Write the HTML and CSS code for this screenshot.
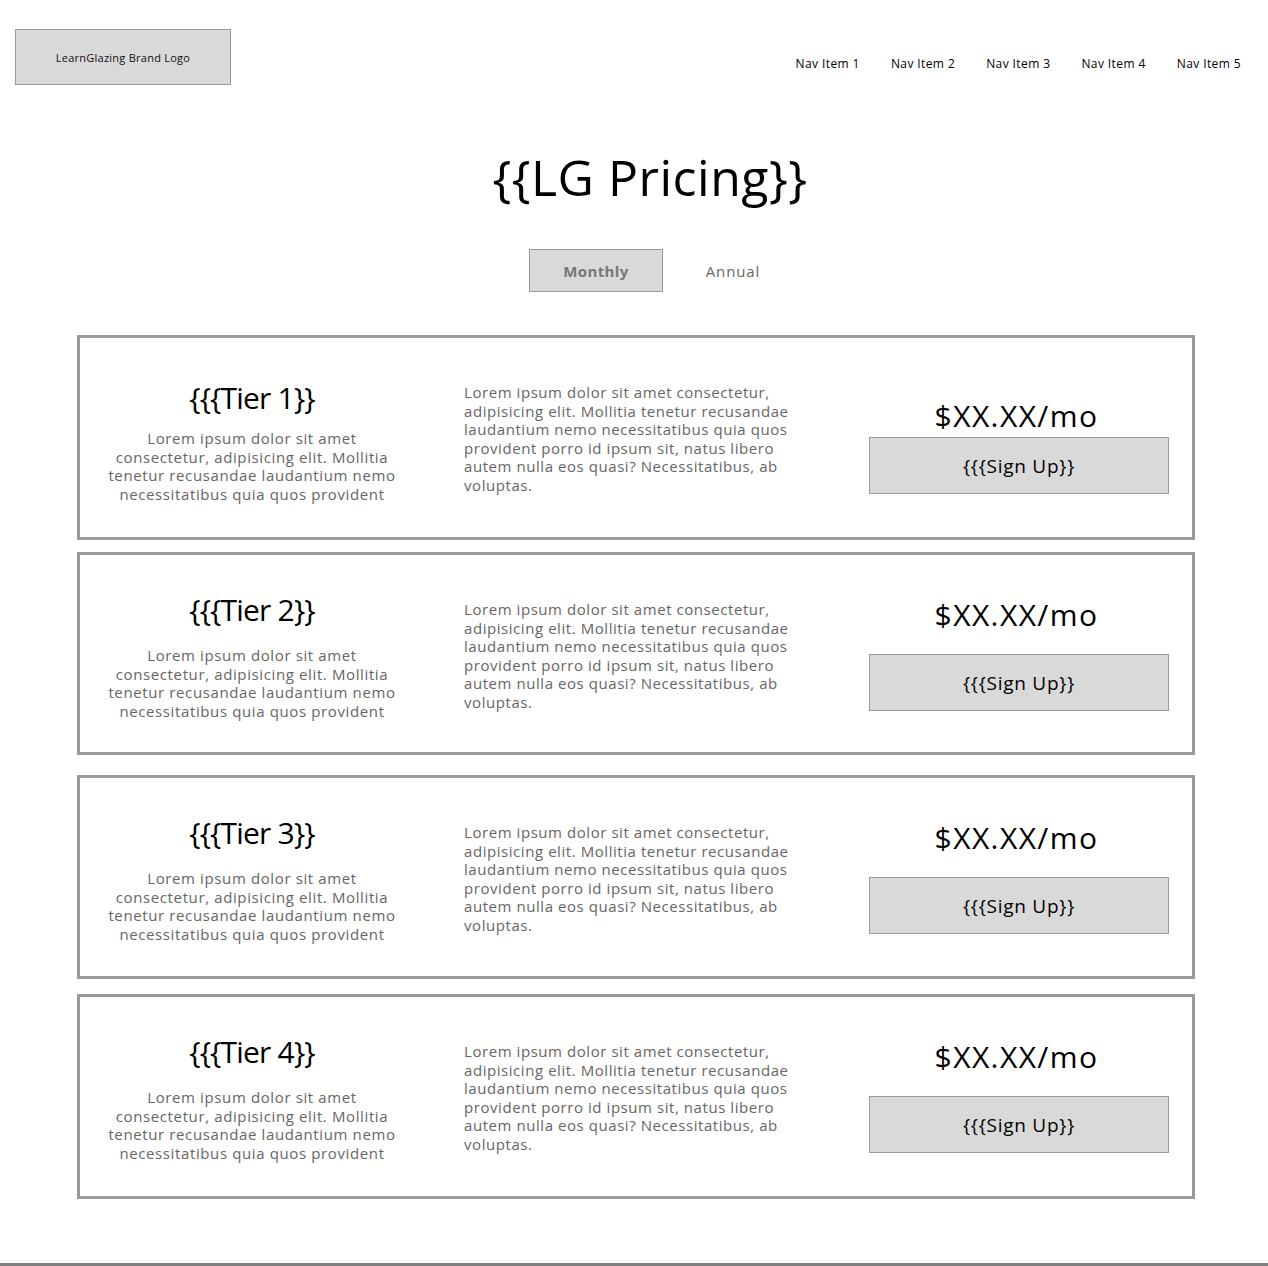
FILE: index.html
```html
<!DOCTYPE html>
<html lang="en">
<head>
<meta charset="utf-8">
<title>LG Pricing</title>
<link rel="stylesheet" href="styles.css">
</head>
<body>
<header class="header">
  <div class="logo">LearnGlazing Brand Logo</div>
  <nav class="nav">
    <a class="nav-item">Nav Item 1</a>
    <a class="nav-item">Nav Item 2</a>
    <a class="nav-item">Nav Item 3</a>
    <a class="nav-item">Nav Item 4</a>
    <a class="nav-item">Nav Item 5</a>
  </nav>
</header>

<h1 class="title">{{LG Pricing}}</h1>

<div class="toggle">
  <button class="toggle-btn toggle-btn--active">Monthly</button>
  <button class="toggle-btn toggle-btn--plain">Annual</button>
</div>

<main class="cards">
  <section class="card card--first">
    <div class="col-tier">
      <h2 class="tier-name">{{{Tier 1}}</h2>
      <p class="tier-desc">Lorem ipsum dolor sit amet<br>consectetur, adipisicing elit. Mollitia<br>tenetur recusandae laudantium nemo<br>necessitatibus quia quos provident</p>
    </div>
    <p class="col-text">Lorem ipsum dolor sit amet consectetur,<br>adipisicing elit. Mollitia tenetur recusandae<br>laudantium nemo necessitatibus quia quos<br>provident porro id ipsum sit, natus libero<br>autem nulla eos quasi? Necessitatibus, ab<br>voluptas.</p>
    <div class="col-price">
      <div class="price">$XX.XX/mo</div>
      <button class="signup">{{{Sign Up}}</button>
    </div>
  </section>

  <section class="card card--second">
    <div class="col-tier">
      <h2 class="tier-name">{{{Tier 2}}</h2>
      <p class="tier-desc">Lorem ipsum dolor sit amet<br>consectetur, adipisicing elit. Mollitia<br>tenetur recusandae laudantium nemo<br>necessitatibus quia quos provident</p>
    </div>
    <p class="col-text">Lorem ipsum dolor sit amet consectetur,<br>adipisicing elit. Mollitia tenetur recusandae<br>laudantium nemo necessitatibus quia quos<br>provident porro id ipsum sit, natus libero<br>autem nulla eos quasi? Necessitatibus, ab<br>voluptas.</p>
    <div class="col-price">
      <div class="price">$XX.XX/mo</div>
      <button class="signup">{{{Sign Up}}</button>
    </div>
  </section>

  <section class="card card--third">
    <div class="col-tier">
      <h2 class="tier-name">{{{Tier 3}}</h2>
      <p class="tier-desc">Lorem ipsum dolor sit amet<br>consectetur, adipisicing elit. Mollitia<br>tenetur recusandae laudantium nemo<br>necessitatibus quia quos provident</p>
    </div>
    <p class="col-text">Lorem ipsum dolor sit amet consectetur,<br>adipisicing elit. Mollitia tenetur recusandae<br>laudantium nemo necessitatibus quia quos<br>provident porro id ipsum sit, natus libero<br>autem nulla eos quasi? Necessitatibus, ab<br>voluptas.</p>
    <div class="col-price">
      <div class="price">$XX.XX/mo</div>
      <button class="signup">{{{Sign Up}}</button>
    </div>
  </section>

  <section class="card card--fourth">
    <div class="col-tier">
      <h2 class="tier-name">{{{Tier 4}}</h2>
      <p class="tier-desc">Lorem ipsum dolor sit amet<br>consectetur, adipisicing elit. Mollitia<br>tenetur recusandae laudantium nemo<br>necessitatibus quia quos provident</p>
    </div>
    <p class="col-text">Lorem ipsum dolor sit amet consectetur,<br>adipisicing elit. Mollitia tenetur recusandae<br>laudantium nemo necessitatibus quia quos<br>provident porro id ipsum sit, natus libero<br>autem nulla eos quasi? Necessitatibus, ab<br>voluptas.</p>
    <div class="col-price">
      <div class="price">$XX.XX/mo</div>
      <button class="signup">{{{Sign Up}}</button>
    </div>
  </section>
</main>

<footer class="footer"></footer>
</body>
</html>
```

FILE: styles.css
```css
* { box-sizing: border-box; }

html, body {
  margin: 0;
  padding: 0;
  background: #ffffff;
}

body {
  font-family: "Open Sans", "Noto Sans", "Liberation Sans", sans-serif;
  color: #000;
  overflow: hidden;
}

.header {
  display: flex;
  justify-content: space-between;
  align-items: flex-start;
  padding: 29px 27px 0 15px;
  height: 85px;
}

.logo {
  width: 216px;
  height: 56px;
  background: #d9d9d9;
  border: 1px solid #9a9a9a;
  display: flex;
  align-items: center;
  justify-content: center;
  font-size: 11px;
  letter-spacing: 0.25px;
  color: #111;
}

.nav {
  display: flex;
  gap: 31px;
  margin-top: 27px;
}

.nav-item {
  font-size: 12px;
  line-height: 16px;
  letter-spacing: 0.4px;
  color: #000;
  white-space: nowrap;
}

.title {
  margin: 62px 0 0;
  padding-left: 32px;
  font-size: 50px;
  line-height: 60px;
  font-weight: 400;
  letter-spacing: 0.5px;
  text-align: center;
}

.toggle {
  display: flex;
  margin: 42px 0 0 529px;
}

.toggle-btn {
  width: 134px;
  height: 43px;
  border: 1px solid transparent;
  background: transparent;
  font-family: inherit;
  font-size: 15px;
  letter-spacing: 0.9px;
  color: #666;
  padding: 0;
}

.toggle-btn--plain {
  padding-left: 6px;
}

.toggle-btn--active {
  background: #d9d9d9;
  border-color: #9a9a9a;
  font-weight: 700;
  letter-spacing: 0.4px;
  color: #777;
}

.cards {
  width: 1118px;
  margin: 43px 0 0 77px;
  display: flex;
  flex-direction: column;
}

.card {
  height: 205px;
  border: 3px solid #9a9a9a;
  display: grid;
  grid-template-columns: 296px 341px 300px;
  column-gap: 64px;
  padding: 0 24px;
  align-items: start;
  overflow: hidden;
}

.card--second { margin-top: 12px; height: 203px; }
.card--third { margin-top: 20px; height: 204px; }
.card--fourth { margin-top: 15px; }

.col-tier {
  margin-top: 37px;
  text-align: center;
}

.tier-name {
  margin: 0;
  font-size: 30px;
  line-height: 36px;
  font-weight: 400;
  letter-spacing: -0.8px;
  white-space: nowrap;
}

.tier-desc {
  margin: 18px 0 0;
  font-size: 15px;
  line-height: 18.5px;
  letter-spacing: 0.62px;
  color: #666;
  white-space: nowrap;
  height: 76px;
  overflow: hidden;
}

.card--first .col-tier { margin-top: 42px; }
.card--first .tier-desc { margin-top: 13px; }

.col-text {
  margin: 45px 0 0;
  font-size: 15px;
  line-height: 18.5px;
  letter-spacing: 0.56px;
  color: #666;
  white-space: nowrap;
}

.col-price {
  margin-top: 42px;
  display: flex;
  flex-direction: column;
  align-items: center;
}

.card--first .col-price { margin-top: 60px; }

.price {
  font-size: 30px;
  line-height: 36px;
  letter-spacing: 1.4px;
  margin-bottom: 21px;
  margin-left: -5px;
  white-space: nowrap;
}

.card--first .price { margin-bottom: 3px; }

.signup {
  width: 300px;
  height: 57px;
  background: #d9d9d9;
  border: 1px solid #9a9a9a;
  font-family: inherit;
  font-size: 19px;
  letter-spacing: 0.75px;
  color: #000;
  padding: 0;
}

.footer {
  margin-top: 64px;
  height: 10px;
  background: #808080;
}
```
